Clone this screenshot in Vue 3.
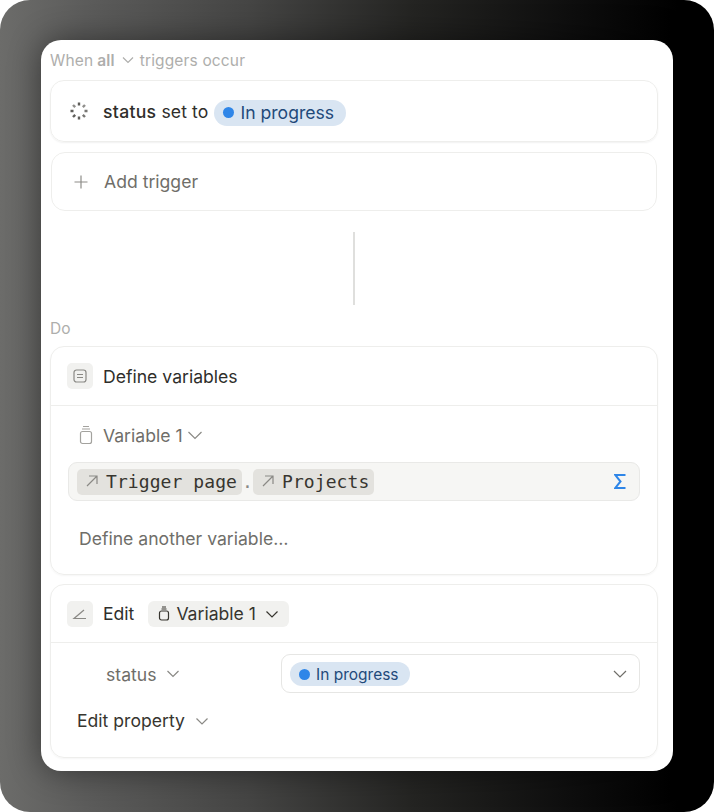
<script setup>
// rows of the define / edit blocks
const variableName = 'Variable 1'
const statusLabel = 'In progress'
</script>

<template>
  <div class="frame">
    <div class="panel">
      <div class="when">
        <span>When</span> <b>all</b>
        <svg class="chev-when" width="14" height="14" viewBox="0 0 14 14"><path d="M2 4.500l5 5 5-5" /></svg>
        <span>triggers occur</span>
      </div>

      <div class="card trigger">
        <svg class="spinner" width="20" height="20" viewBox="0 0 20 20">
          <path d="M10 1.500v3" />
          <path d="M4 4l2.200 2.200" opacity=".7" />
          <path d="M1.500 10h3" />
          <path d="M4 16l2.200-2.200" />
          <path d="M10 15.500v3" />
          <path d="M16 16l-2.200-2.200" opacity=".85" />
          <path d="M15.500 10h3" opacity=".85" />
          <path d="M16 4l-2.200 2.200" opacity=".7" />
        </svg>
        <span class="trigger-text"><b>status</b> set to</span>
        <span class="pill big"><i class="dot"></i>{{ statusLabel }}</span>
      </div>

      <div class="card add">
        <svg class="plus" width="16" height="16" viewBox="0 0 16 16"><path d="M8 1.500v13M1.500 8h13" /></svg>
        <span>Add trigger</span>
      </div>

      <div class="connector"></div>

      <div class="do">Do</div>

      <div class="card block">
        <div class="block-head define-head">
          <span class="icon-box">
            <svg width="16" height="16" viewBox="0 0 16 16"><rect x="2" y="2" width="12" height="12" rx="2.500" /><path d="M5 6.500h6M5 9.500h6" /></svg>
          </span>
          <span class="head-title">Define variables</span>
        </div>
        <div class="define-body">
          <div class="var-row">
            <svg class="jar" width="16" height="20" viewBox="0 0 16 20"><path d="M5 1.500h6M4 4h8" /><rect x="2.500" y="6.500" width="11" height="12" rx="2" /></svg>
            <span>{{ variableName }}</span>
            <svg class="chev" width="16" height="16" viewBox="0 0 16 16"><path d="M1.500 5l6.500 6.500L14.500 5" /></svg>
          </div>
          <div class="formula">
            <span class="token">
              <svg width="16" height="16" viewBox="0 0 16 16"><path d="M3 13L13 3M5 3h8v8" /></svg>Trigger page
            </span>
            <span class="sep">.</span>
            <span class="token">
              <svg width="16" height="16" viewBox="0 0 16 16"><path d="M3 13L13 3M5 3h8v8" /></svg>Projects
            </span>
            <span class="sigma">
              <svg width="12" height="17" viewBox="0 0 12 17"><path d="M11.500 2H1.200l5.300 6.500L1.200 15h10.300" /></svg>
            </span>
          </div>
          <div class="another">Define another variable…</div>
        </div>
      </div>

      <div class="card block edit">
        <div class="block-head">
          <span class="icon-box">
            <svg width="16" height="16" viewBox="0 0 16 16"><path d="M12 4L2 12.500h12" /></svg>
          </span>
          <span class="head-title">Edit</span>
          <span class="var-chip">
            <svg class="jar-small" width="12" height="15" viewBox="0 0 12 15"><path d="M4 1h4M3.500 3h5" /><rect x="1.500" y="5" width="9" height="9" rx="2" /></svg>
            {{ variableName }}
            <svg class="chev-dark" width="14" height="14" viewBox="0 0 14 14"><path d="M1.500 4.500L7 10l5.500-5.500" /></svg>
          </span>
        </div>
        <div class="edit-body">
          <div class="prop-row">
            <div class="prop-name">
              status
              <svg class="chev" width="14" height="14" viewBox="0 0 14 14"><path d="M1.500 4L7 9.500 12.500 4" /></svg>
            </div>
            <div class="select">
              <span class="pill small"><i class="dot"></i>{{ statusLabel }}</span>
              <svg class="chev" width="16" height="16" viewBox="0 0 16 16"><path d="M2 5l6 6 6-6" /></svg>
            </div>
          </div>
          <div class="edit-prop">
            Edit property
            <svg class="chev" width="14" height="14" viewBox="0 0 14 14"><path d="M1.500 4.500L7 10l5.500-5.500" /></svg>
          </div>
        </div>
      </div>
    </div>
  </div>
</template>

<style scoped>
.frame {
  width: 714px;
  height: 812px;
  box-sizing: border-box;
  padding: 40px 41px 41px;
  border-radius: 30px;
  background: linear-gradient(90deg, #6c6c6a 0%, #5c5c5b 12%, #454544 35%, #242422 58%, #0e0e0e 80%, #000 95%);
  font-family: Inter, "Liberation Sans", sans-serif;
  color: #37352f;
  overflow: hidden;
}
.panel {
  height: 731px;
  box-sizing: border-box;
  background: #fff;
  border-radius: 20px;
  padding: 10px 15px 0 9px;
  box-shadow: 0 0 32px rgba(0, 0, 0, 0.45);
}
svg {
  fill: none;
  stroke: currentColor;
  stroke-width: 1.200;
  flex: none;
}
.when {
  display: flex;
  align-items: center;
  height: 20px;
  font-size: 15.500px;
  letter-spacing: 0.15px;
  color: #aeaeac;
  gap: 4px;
}
.when b {
  font-weight: 600;
}
.chev-when {
  margin: 0 1px 0 2px;
}
.card {
  border: 1px solid #eeeeec;
  border-radius: 14px;
  box-sizing: border-box;
}
.trigger {
  margin-top: 10px;
  height: 62px;
  display: flex;
  align-items: center;
  padding-left: 18px;
  font-size: 17.600px;
  box-shadow: 0 1px 2px rgba(0, 0, 0, 0.06);
}
.spinner {
  color: #5f5e5a;
  stroke-width: 2.400;
  margin-right: 14px;
}
.trigger-text {
  color: #2f2e2b;
  margin-right: 6px;
  letter-spacing: 0.1px;
}
.trigger-text b {
  font-weight: 500;
  letter-spacing: 0.3px;
}
.pill {
  display: inline-flex;
  align-items: center;
  background: #d9e5f2;
  color: #1f4a7a;
  border-radius: 13px;
}
.pill.big {
  height: 26px;
  padding: 0 12px 0 9px;
  font-size: 17.600px;
  margin-top: 3px;
}
.pill.small {
  height: 24px;
  padding: 0 11px 0 9px;
  font-size: 15.500px;
  margin-top: 1px;
}
.dot {
  width: 11px;
  height: 11px;
  border-radius: 50%;
  background: #2f86e8;
  margin-right: 6px;
}
.add {
  margin: 10px 1px 0;
  height: 59px;
  display: flex;
  align-items: center;
  padding-left: 21px;
  font-size: 17.600px;
  color: #6f6e69;
}
.plus {
  color: #8d8c88;
  margin-right: 15px;
}
.connector {
  width: 2px;
  height: 73px;
  background: #dfdfdd;
  margin: 21px 0 0 303px;
}
.do {
  margin-top: 15px;
  height: 18px;
  line-height: 18px;
  font-size: 15.500px;
  color: #aeaeac;
}
.block {
  margin-top: 8px;
  height: 229px;
  box-shadow: 0 1px 2px rgba(0, 0, 0, 0.04);
}
.block.edit {
  margin-top: 9px;
  height: 174px;
}
.block-head {
  height: 58px;
  display: flex;
  align-items: center;
  padding-left: 16px;
  border-bottom: 1px solid #eeeeec;
  box-sizing: border-box;
}
.define-head {
  height: 59px;
}
.icon-box {
  width: 26px;
  height: 26px;
  border-radius: 5px;
  background: #f1f1ef;
  color: #8a8985;
  display: flex;
  align-items: center;
  justify-content: center;
  margin-right: 10px;
}
.head-title {
  font-size: 17.600px;
  color: #2f2e2b;
}
.define-body {
  padding: 0 17px 0 17px;
}
.var-row {
  display: flex;
  align-items: center;
  height: 30px;
  margin-top: 14px;
  padding-left: 10px;
  font-size: 17.600px;
  color: #6f6e69;
}
.jar {
  color: #a3a29e;
  margin-right: 9px;
}
.var-row .chev {
  margin-left: 4px;
  color: #8a8985;
}
.formula {
  margin-top: 12px;
  height: 39px;
  box-sizing: border-box;
  background: #f6f6f4;
  border: 1px solid #e9e9e7;
  border-radius: 9px;
  display: flex;
  align-items: center;
  padding-left: 8px;
  font-family: "DejaVu Sans Mono", monospace;
  font-size: 18px;
  letter-spacing: 0.08px;
  color: #37352f;
}
.token {
  display: flex;
  align-items: center;
  height: 26px;
  box-sizing: border-box;
  padding: 0 5px 1px 7px;
  background: #e3e2de;
  border-radius: 5px;
}
.token svg {
  color: #8a8985;
  margin-right: 6px;
}
.sep {
  width: 11px;
  text-align: center;
  color: #8a8985;
}
.sigma {
  margin-left: auto;
  margin-right: 13px;
  color: #2f86e8;
  display: flex;
}
.sigma svg {
  stroke-width: 2;
}
.another {
  margin-top: 27px;
  padding-left: 11px;
  font-size: 17.600px;
  color: #6f6e69;
}
.var-chip {
  display: flex;
  align-items: center;
  height: 26px;
  margin-left: 14px;
  padding: 0 10px;
  background: #f1f1ef;
  border-radius: 6px;
  font-size: 17.600px;
  color: #37352f;
  gap: 6px;
}
.chev-dark {
  margin-left: 3px;
}
.edit-body {
  padding: 11px 17px 0 17px;
}
.prop-row {
  display: flex;
  align-items: center;
}
.prop-name {
  width: 213px;
  padding: 1px 0 0 38px;
  box-sizing: border-box;
  font-size: 17.600px;
  color: #6f6e69;
  display: flex;
  align-items: center;
  gap: 10px;
}
.prop-name .chev, .edit-prop .chev {
  color: #8a8985;
}
.select {
  flex: 1;
  height: 39px;
  box-sizing: border-box;
  border: 1px solid #e6e6e4;
  border-radius: 9px;
  display: flex;
  align-items: center;
  justify-content: space-between;
  padding: 0 11px 0 8px;
}
.select .chev {
  color: #6f6e69;
}
.edit-prop {
  display: flex;
  align-items: center;
  gap: 10px;
  margin-top: 17px;
  padding-left: 9px;
  font-size: 17.600px;
  color: #37352f;
}
</style>

<style>
body {
  background: #fff;
}
</style>
